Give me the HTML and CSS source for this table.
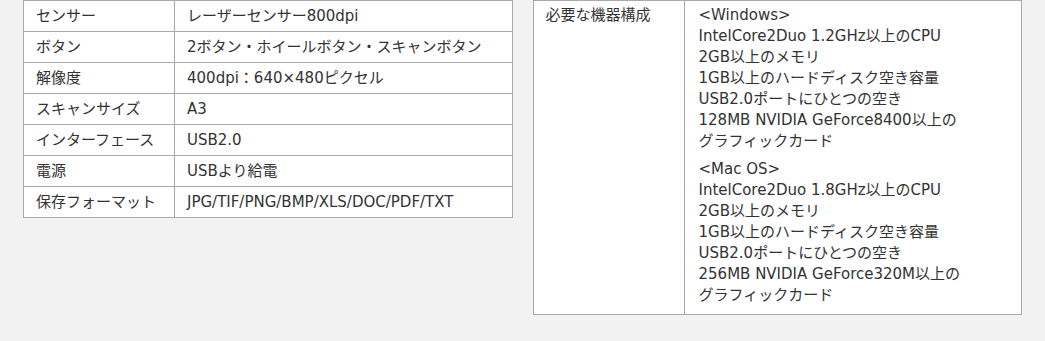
FILE: index.html
```html
<!DOCTYPE html>
<html lang="ja">

<head>
    <meta charset="UTF-8">
    <meta name="viewport" content="width=device-width, initial-scale=1.0">
    <title>仕様</title>
    <link rel="stylesheet" href="styles.css">
</head>

<body>
    <div class="spec">
        <table class="spec-table">
            <tr>
                <th>センサー</th>
                <td>レーザーセンサー800dpi</td>
            </tr>
            <tr>
                <th>ボタン</th>
                <td>2ボタン・ホイールボタン・スキャンボタン</td>
            </tr>
            <tr>
                <th>解像度</th>
                <td>400dpi：640×480ピクセル</td>
            </tr>
            <tr>
                <th>スキャンサイズ</th>
                <td>A3</td>
            </tr>
            <tr>
                <th>インターフェース</th>
                <td>USB2.0</td>
            </tr>
            <tr>
                <th>電源</th>
                <td>USBより給電</td>
            </tr>
            <tr>
                <th>保存フォーマット</th>
                <td>JPG/TIF/PNG/BMP/XLS/DOC/PDF/TXT</td>
            </tr>
        </table>

        <table class="spec-table tall">
            <tr>
                <th>必要な機器構成</th>
                <td>
                    <p>&lt;Windows&gt;<br>
                        IntelCore2Duo 1.2GHz以上のCPU<br>
                        2GB以上のメモリ<br>
                        1GB以上のハードディスク空き容量<br>
                        USB2.0ポートにひとつの空き<br>
                        128MB NVIDIA GeForce8400以上の<br>
                        グラフィックカード</p>
                    <p>&lt;Mac OS&gt;<br>
                        IntelCore2Duo 1.8GHz以上のCPU<br>
                        2GB以上のメモリ<br>
                        1GB以上のハードディスク空き容量<br>
                        USB2.0ポートにひとつの空き<br>
                        256MB NVIDIA GeForce320M以上の<br>
                        グラフィックカード</p>
                </td>
            </tr>
        </table>
    </div>
</body>

</html>
```

FILE: styles.css
```css
body {
    margin: 0;
    background-color: #f2f2f2;
    color: #333;
    font-family: "DejaVu Sans", "Noto Sans CJK JP", sans-serif;
    font-size: 15px;
}

.spec {
    display: flex;
    align-items: flex-start;
    gap: 20px;
    padding: 0 23px;
}

.spec-table {
    width: 490px;
    table-layout: fixed;
    border-collapse: collapse;
    background-color: #fff;
    border: 1px solid #aaa;
    font-size: 15px;
}

.spec-table th,
.spec-table td {
    border: 1px solid #aaa;
    padding: 5px 12px;
    line-height: 20px;
    text-align: left;
    font-weight: normal;
    vertical-align: top;
    white-space: nowrap;
}

.spec-table th {
    width: 126px;
}

.tall td {
    padding: 4px 14px 8px;
    line-height: 21px;
}

.tall th {
    padding-top: 4px;
}

.tall p {
    margin: 0;
}

.tall p + p {
    margin-top: 7px;
}
```
